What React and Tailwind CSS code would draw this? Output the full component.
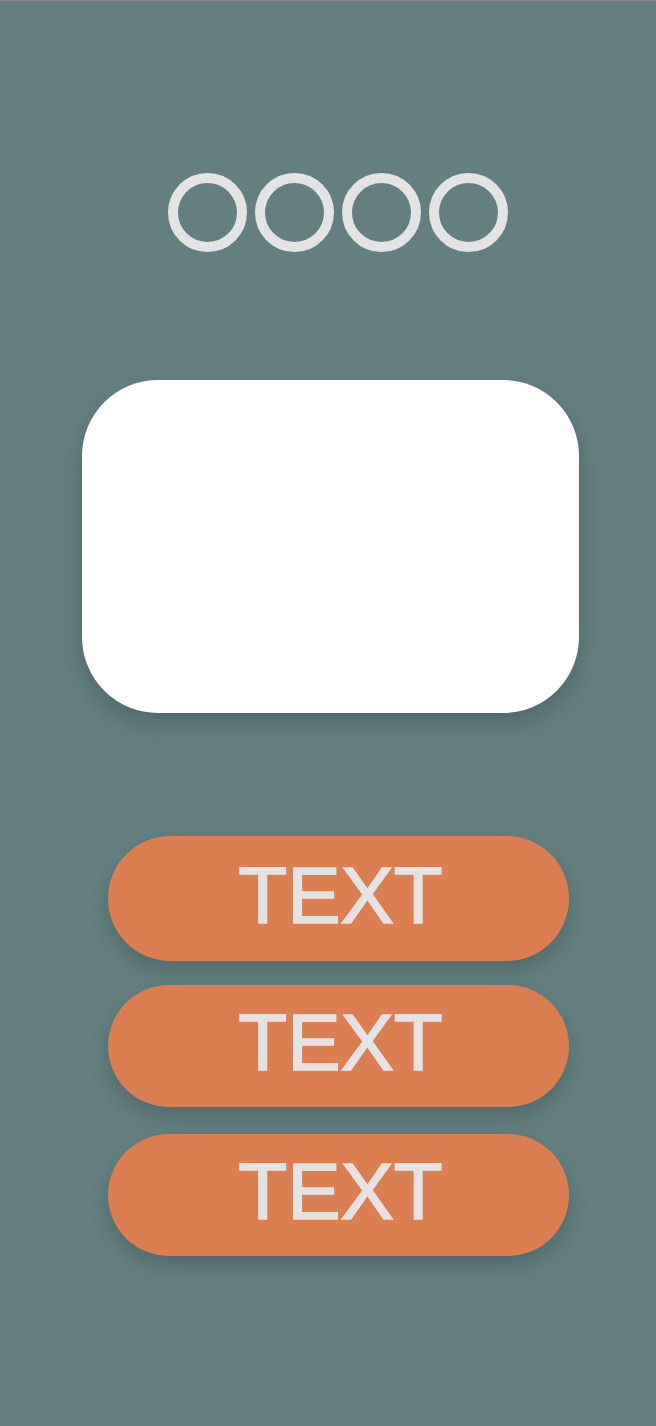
export default function App() {
  const btn =
    "w-[461px] ml-[108px] rounded-full bg-[#DB7F50] flex items-center justify-center shadow-[0_10px_22px_rgba(0,0,0,0.18)]";
  const txt =
    "text-[#E3E3E3] text-[80px] leading-none [-webkit-text-stroke:1.6px_#E3E3E3] font-['Liberation_Sans',Arial,sans-serif] -translate-y-[3px] pl-[4px]";
  return (
    <div className="w-[656px] h-[1426px] bg-[#637F80] border-t border-[#8a8a82] flex flex-col overflow-hidden">
      <div className="flex gap-[8px] ml-[168px] mt-[172px]">
        {[0, 1, 2, 3].map((i) => (
          <div
            key={i}
            className="w-[79px] h-[79px] rounded-full border-[10px] border-[#E3E3E3]"
          />
        ))}
      </div>
      <div className="ml-[82px] mt-[128px] w-[497px] h-[333px] rounded-[76px] bg-white shadow-[0_12px_24px_rgba(0,0,0,0.18)]" />
      <div className={btn + " mt-[123px] h-[125px]"}>
        <span className={txt}>TEXT</span>
      </div>
      <div className={btn + " mt-[24px] h-[122px]"}>
        <span className={txt}>TEXT</span>
      </div>
      <div className={btn + " mt-[27px] h-[122px]"}>
        <span className={txt}>TEXT</span>
      </div>
    </div>
  );
}
